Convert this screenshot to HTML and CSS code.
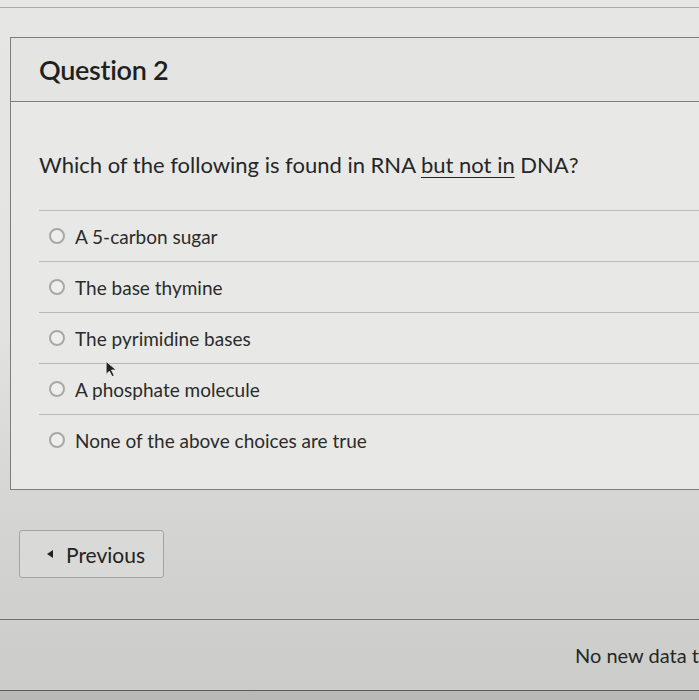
FILE: index.html
```html
<!DOCTYPE html>
<html>
<head>
<meta charset="utf-8">
<link rel="stylesheet" href="styles.css">
</head>
<body>
<div class="topstrip"></div>
<div class="quiz">
  <div class="qhead"><h2 class="qtitle">Question 2</h2></div>
  <div class="qbody">
    <p class="qtext">Which of the following is found in RNA <u>but not in</u> DNA?</p>
    <ul class="answers">
      <li class="answer"><span class="radio"></span>A 5-carbon sugar</li>
      <li class="answer"><span class="radio"></span>The base thymine</li>
      <li class="answer"><span class="radio"></span>The pyrimidine bases</li>
      <li class="answer"><span class="radio"></span>A phosphate molecule<svg class="cursor" width="13" height="18" viewBox="0 0 12 16"><path d="M1 1 L1 13 L4 10 L6.5 15 L8.5 14 L6 9 L10.5 9 Z" fill="#222" stroke="#eee" stroke-width="0.8"/></svg></li>
      <li class="answer"><span class="radio"></span>None of the above choices are true</li>
    </ul>
  </div>
</div>
<div class="nav">
  <button class="prev"><span class="tri"></span>Previous</button>
</div>
<footer class="foot">
  <span class="status">No new data to save.</span>
</footer>
<div class="bottomstrip"></div>
</body>
</html>
```
FILE: styles.css
```css
html, body {
  margin: 0;
  padding: 0;
}
body {
  width: 699px;
  height: 700px;
  overflow: hidden;
  font-family: Lato, "Open Sans", sans-serif;
  color: #2b2b2b;
  background: linear-gradient(180deg, #e6e7e4 0%, #e3e4e1 45%, #d4d5d2 75%, #cbccc9 100%);
}
.topstrip {
  height: 7px;
  border-bottom: 1px solid #a9aaa7;
}
.quiz {
  margin: 29px 0 0 10px;
  border: 1px solid #7d7e7b;
  border-right: none;
  background: #e8e9e6;
}
.qhead {
  height: 63px;
  border-bottom: 1px solid #7f807d;
  background: #e4e5e2;
  display: flex;
  align-items: center;
  padding-left: 28px;
}
.qtitle {
  margin: 0;
  font-size: 27px;
  font-weight: 600;
  color: #1f1f1f;
  letter-spacing: -0.3px;
}
.qbody {
  padding: 0 0 24px 28px;
}
.qtext {
  margin: 0;
  padding-top: 51px;
  padding-bottom: 33px;
  font-size: 22px;
  line-height: 24px;
  color: #262626;
  border-bottom: 1px solid #b8b9b6;
}
.qtext u {
  text-decoration-thickness: 1px;
  text-underline-offset: 4px;
}
.answers {
  list-style: none;
  margin: 0;
  padding: 0;
}
.answer {
  position: relative;
  display: flex;
  align-items: center;
  height: 50px;
  border-bottom: 1px solid #b8b9b6;
  font-size: 19px;
  color: #2b2b2b;
  padding-left: 10px;
}
.answer:last-child {
  border-bottom: none;
}
.radio {
  width: 12px;
  height: 12px;
  border: 2px solid #a8a9a6;
  border-radius: 50%;
  background: #eeefec;
  margin-right: 10px;
  flex: none;
}
.cursor {
  position: absolute;
  left: 66px;
  top: -4px;
}
.nav {
  padding: 40px 0 0 19px;
  height: 89px;
  border-bottom: 1px solid #6f706d;
}
.prev {
  width: 145px;
  height: 48px;
  border: 1px solid #a3a4a1;
  border-radius: 3px;
  background: #d9dad7;
  font-family: Lato, "Open Sans", sans-serif;
  font-size: 21px;
  color: #232323;
  display: flex;
  align-items: center;
  padding: 0 0 0 27px;
}
.tri {
  width: 0;
  height: 0;
  border-top: 4px solid transparent;
  border-bottom: 4px solid transparent;
  border-right: 6px solid #222;
  margin-right: 13px;
}
.foot {
  height: 70px;
  display: flex;
  align-items: center;
  padding-left: 575px;
  white-space: nowrap;
  overflow: hidden;
  border-bottom: 1px solid #5d5e5b;
}
.status {
  font-size: 20px;
  color: #262626;
}
.bottomstrip {
  height: 20px;
  background: #b9bab7;
}
```
